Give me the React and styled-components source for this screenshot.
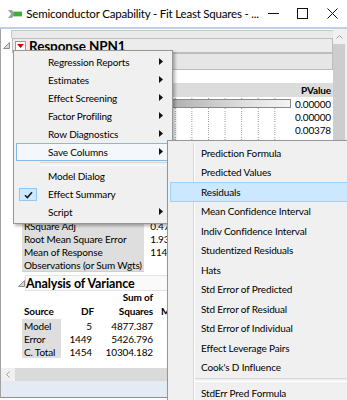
import React from "react";
import styled, { createGlobalStyle } from "styled-components";

const GlobalStyle = createGlobalStyle`
  html, body {
    margin: 0;
    padding: 0;
    background: #fff;
  }
  body {
    font-family: Lato, "Open Sans", sans-serif;
    color: #000;
  }
  * {
    box-sizing: border-box;
  }
`;

const Window = styled.div`
  position: relative;
  width: 347px;
  height: 400px;
  overflow: hidden;
  display: flex;
  flex-direction: column;
  background: #fff;
  padding-bottom: 2px;
`;

const TitleBar = styled.div`
  height: 27px;
  display: flex;
  align-items: center;
  padding-left: 8px;
`;

const Title = styled.div`
  flex: 1;
  margin-left: 4px;
  font-size: 11.5px;
  letter-spacing: -0.2px;
  white-space: nowrap;
`;

const WinButton = styled.div`
  width: 37px;
  height: 27px;
  display: flex;
  align-items: center;
  justify-content: center;
`;

const TitleLine = styled.div`
  height: 2px;
  background: #bcd0e7;
`;

const Body = styled.div`
  flex: 1;
  display: flex;
  border-left: 1px solid #a3a3a3;
  min-height: 0;
`;

const Content = styled.div`
  flex: 1;
  padding-top: 1px;
  overflow: hidden;
  font-size: 10px;
  letter-spacing: -0.15px;
`;

const VScroll = styled.div`
  width: 14px;
  display: flex;
  flex-direction: column;
  border-right: 2px solid #f0f0f0;
  background: #f0f0f0;
`;

const ScrollArrow = styled.div`
  height: 15px;
  display: flex;
  align-items: center;
  justify-content: center;
  background: #f0f0f0;
`;

const ScrollThumb = styled.div`
  flex: 1;
  background: #cdcdcd;
`;

const HScroll = styled.div`
  height: 13px;
  display: flex;
  background: #dadada;
`;

const HArrow = styled.div`
  width: 15px;
  display: flex;
  align-items: center;
  justify-content: center;
  background: #f0f0f0;
  border-left: 1px solid #a3a3a3;
`;

const StatusBar = styled.div`
  height: 17px;
  background: #e5ebf4;
  border-left: 1px solid #a3a3a3;
  border-bottom: 1px solid #8d8d8d;
`;

/* report outline */

const PrevStrip = styled.div`
  height: 8px;
  margin-left: 10px;
  background: #e9e9e9;
  border-top: 1px solid #c6c6c6;
  border-left: 1px solid #c6c6c6;
`;

const OutlineRow = styled.div`
  display: flex;
  align-items: center;
  height: ${(p) => p.$h}px;
  margin-left: ${(p) => p.$indent}px;
`;

const DisclosureBox = styled.div`
  width: ${(p) => p.$w}px;
  display: flex;
  justify-content: center;
`;

const OutlineBox = styled.div`
  flex: 1;
  height: 100%;
  display: flex;
  align-items: center;
  gap: 3px;
  padding-left: ${(p) => p.$pad ?? 2}px;
  background: ${(p) => p.$bg};
  border: 1px solid ${(p) => p.$line || "#bdbdbd"};
  font-weight: 700;
  font-size: ${(p) => p.$size}px;
  letter-spacing: -0.1px;
  white-space: nowrap;
`;

const RedButton = styled.div`
  width: 11px;
  height: 10px;
  background: #fff;
  border: 1px solid #9a9a9a;
  display: flex;
  align-items: center;
  justify-content: center;
`;

const Indent = styled.div`
  padding-left: 20px;
`;

const Gap = styled.div`
  height: ${(p) => p.$h}px;
`;

const EffectTable = styled.div`
  display: grid;
  grid-template-columns: 80px 40px 1fr 42px;
`;

const HeadCell = styled.div`
  height: 14px;
  background: #dcdcdc;
  font-weight: 700;
  display: flex;
  align-items: center;
  justify-content: ${(p) => (p.$right ? "flex-end" : "flex-start")};
  padding: 0 2px;
`;

const Cell = styled.div`
  height: 13px;
  display: flex;
  align-items: center;
  justify-content: ${(p) => (p.$right ? "flex-end" : "flex-start")};
  padding: 0 ${(p) => p.$padR ?? 2}px 0 2px;
  background: ${(p) => p.$bg || "transparent"};
  white-space: nowrap;
`;

const ChartCell = styled.div`
  height: 13px;
  display: flex;
  align-items: center;
  background-image: linear-gradient(to bottom, #fff 50%, transparent 50%),
    linear-gradient(to right, #9a9a9a 1px, transparent 1px);
  background-size: 100% 2px, 16.6px 100%;
  background-position: 0 0, 0.6px 0;
`;

const Bar = styled.div`
  height: 9px;
  border: 1px solid #8a8a8a;
  background: linear-gradient(to right, #9c9c9c, #e0e0e0 70%, #f4f4f4);
`;

const ButtonRow = styled.div`
  height: 24px;
  display: flex;
  align-items: center;
  gap: 4px;
`;

const SmallButton = styled.div`
  height: 18px;
  width: ${(p) => p.$w}px;
  border: 1px solid #adadad;
  background: #e1e1e1;
`;

const SummaryTable = styled.div`
  display: grid;
  grid-template-columns: 122px 50px;
  margin-left: 1px;
  width: 122px;
  border-bottom: 1px solid #cfcfcf;
`;

const AnovaTable = styled.div`
  display: grid;
  grid-template-columns: 39px 33px 59px auto;
  justify-content: start;
  margin-left: 1px;
`;

const AnovaHead = styled.div`
  font-weight: 700;
  line-height: 14px;
  display: flex;
  flex-direction: column;
  justify-content: flex-end;
  align-items: ${(p) => (p.$right ? "flex-end" : "flex-start")};
  padding: 0 ${(p) => (p.$right ? 0 : 2)}px 1px ${(p) => p.$padL ?? 2}px;
  height: 28px;
  white-space: nowrap;
`;

/* menus */

const Menu = styled.div`
  position: absolute;
  left: ${(p) => p.$left}px;
  top: ${(p) => p.$top}px;
  width: ${(p) => p.$width}px;
  padding: 2px 0;
  background: #f0f0f0;
  border: 1px solid #979797;
  box-shadow: 2px 2px 3px rgba(0, 0, 0, 0.3);
  font-size: 10px;
  letter-spacing: -0.15px;
  z-index: ${(p) => p.$z};
`;

const Gutter = styled.div`
  position: absolute;
  left: ${(p) => p.$x}px;
  top: 2px;
  bottom: 0;
  width: 2px;
  border-left: 1px solid #d7d7d7;
  border-right: 1px solid #fff;
`;

const MenuItem = styled.div`
  position: relative;
  height: ${(p) => p.$h}px;
  display: flex;
  align-items: center;
  margin: 0 2px;
  padding-left: ${(p) => p.$pad}px;
  white-space: nowrap;
  border: 1px solid
    ${(p) => (p.$state === "open" ? "#84b9e6" : p.$state === "hover" ? "#99d1ff" : "transparent")};
  background: ${(p) => (p.$state === "hover" ? "#cce8ff" : p.$state === "open" ? "#f4f8fc" : "transparent")};
`;

const ItemArrow = styled.div`
  position: absolute;
  right: 6px;
  top: 50%;
  margin-top: -4px;
  line-height: 0;
`;

const CheckBox = styled.div`
  position: absolute;
  left: 2px;
  top: 2px;
  width: 18px;
  height: 13px;
  background: #cce8ff;
  border: 1px solid #90c8f6;
  display: flex;
  align-items: center;
  justify-content: center;
`;

const Separator = styled.div`
  height: 6px;
  margin-left: ${(p) => p.$left}px;
  display: flex;
  align-items: center;
  &::after {
    content: "";
    flex: 1;
    height: 2px;
    border-top: 1px solid #d7d7d7;
    border-bottom: 1px solid #fff;
  }
`;

const Arrow = () => (
  <svg width="4" height="7" viewBox="0 0 4 7">
    <polygon points="0,0 4,3.5 0,7" fill="#111" />
  </svg>
);

const Disclosure = () => (
  <svg width="7" height="7" viewBox="0 0 7 7">
    <polygon points="6.5,0.5 6.5,6.5 0.5,6.5" fill="#d8d8d8" stroke="#8c8c8c" strokeWidth="1" />
  </svg>
);

const mainItems = [
  { label: "Regression Reports", sub: true },
  { label: "Estimates", sub: true },
  { label: "Effect Screening", sub: true },
  { label: "Factor Profiling", sub: true },
  { label: "Row Diagnostics", sub: true },
  { label: "Save Columns", sub: true, state: "open" },
  { sep: true },
  { label: "Model Dialog" },
  { label: "Effect Summary", checked: true },
  { label: "Script", sub: true },
];

const saveItems = [
  "Prediction Formula",
  "Predicted Values",
  "Residuals",
  "Mean Confidence Interval",
  "Indiv Confidence Interval",
  "Studentized Residuals",
  "Hats",
  "Std Error of Predicted",
  "Std Error of Residual",
  "Std Error of Individual",
  "Effect Leverage Pairs",
  "Cook's D Influence",
  null,
  "StdErr Pred Formula",
];

// rows of the effect summary; only the bars and p-values show beside the menu
const effects = [
  { bar: 100, p: "0.00000" },
  { bar: 14, p: "0.00000" },
  { bar: 3, p: "0.00378" },
  { bar: 1, p: "" },
  { bar: 0, p: "" },
];

const summary = [
  ["", ""],
  ["RSquare Adj", "0.471547"],
  ["Root Mean Square Error", "1.935243"],
  ["Mean of Response", "114.0722"],
  ["Observations (or Sum Wgts)", "1455"],
];

const anova = [
  ["Model", "5", "4877.387"],
  ["Error", "1449", "5426.796"],
  ["C. Total", "1454", "10304.182"],
];

export default function App() {
  return (
    <>
      <GlobalStyle />
      <Window>
        <TitleBar>
          <svg width="18" height="12" viewBox="0 0 18 12">
            <polygon points="0,1 5,1 9,6 5,11 0,11 4,6" fill="#9aa3a8" />
            <rect x="7" y="3" width="11" height="6" fill="#3cae3c" />
          </svg>
          <Title>Semiconductor Capability - Fit Least Squares - ...</Title>
          <WinButton>
            <svg width="11" height="11" viewBox="0 0 11 11">
              <line x1="0" y1="5.5" x2="11" y2="5.5" stroke="#111" strokeWidth="1" />
            </svg>
          </WinButton>
          <WinButton>
            <svg width="11" height="11" viewBox="0 0 11 11">
              <rect x="0.5" y="0.5" width="10" height="10" fill="none" stroke="#111" strokeWidth="1" />
            </svg>
          </WinButton>
          <WinButton>
            <svg width="11" height="11" viewBox="0 0 11 11">
              <path d="M0.5 0.5 L10.5 10.5 M10.5 0.5 L0.5 10.5" stroke="#111" strokeWidth="1" />
            </svg>
          </WinButton>
        </TitleBar>
        <TitleLine />

        <Body>
          <Content>
            <PrevStrip />
            <OutlineRow $h={15} $indent={0}>
              <DisclosureBox $w={11}>
                <Disclosure />
              </DisclosureBox>
              <OutlineBox $bg="#ececec" $size={13.5}>
                <RedButton>
                  <svg width="7" height="4" viewBox="0 0 7 4">
                    <polygon points="0,0 7,0 3.5,4" fill="#d40000" />
                  </svg>
                </RedButton>
                Response NPN1
              </OutlineBox>
            </OutlineRow>

            <Indent>
              <OutlineRow $h={17} $indent={0}>
                <OutlineBox $bg="#e6e6e6" $size={12} />
              </OutlineRow>
              <Gap $h={13} />
              <EffectTable>
                <HeadCell />
                <HeadCell />
                <HeadCell />
                <HeadCell $right>PValue</HeadCell>
                {effects.map((e, i) => (
                  <React.Fragment key={i}>
                    <Cell />
                    <Cell />
                    <ChartCell>
                      {e.bar > 0 && <Bar style={{ width: `${e.bar}%` }} />}
                    </ChartCell>
                    <Cell $right>{e.p}</Cell>
                  </React.Fragment>
                ))}
              </EffectTable>
              <ButtonRow>
                <SmallButton $w={48} />
                <SmallButton $w={30} />
                <SmallButton $w={30} />
              </ButtonRow>
              <OutlineRow $h={16} $indent={-6}>
                <DisclosureBox $w={6}>
                  <Disclosure />
                </DisclosureBox>
                <OutlineBox $bg="#f4f4f4" $size={12.5} />
              </OutlineRow>
              <Gap $h={4} />
              <SummaryTable>
                {summary.map(([k, v], i) => (
                  <React.Fragment key={i}>
                    <Cell $bg="#dedede">{k}</Cell>
                    <Cell $right>{v}</Cell>
                  </React.Fragment>
                ))}
              </SummaryTable>
              <Gap $h={3} />
              <OutlineRow $h={16} $indent={-4}>
                <DisclosureBox $w={8}>
                  <Disclosure />
                </DisclosureBox>
                <OutlineBox $bg="#fafafa" $line="#e2e2e2" $size={12.5} $pad={0}>
                  Analysis of Variance
                </OutlineBox>
              </OutlineRow>
              <AnovaTable>
                <AnovaHead>Source</AnovaHead>
                <AnovaHead $right>DF</AnovaHead>
                <AnovaHead $right>
                  <span>Sum of</span>
                  <span>Squares</span>
                </AnovaHead>
                <AnovaHead $padL={8}>Mean Square</AnovaHead>
                {anova.map(([s, df, ss]) => (
                  <React.Fragment key={s}>
                    <Cell $bg="#dedede">{s}</Cell>
                    <Cell $right>{df}</Cell>
                    <Cell $right $padR={0}>{ss}</Cell>
                    <Cell />
                  </React.Fragment>
                ))}
              </AnovaTable>
            </Indent>
          </Content>
          <VScroll>
            <ScrollArrow>
              <svg width="7" height="4" viewBox="0 0 7 4">
                <polyline points="0.5,3.5 3.5,0.5 6.5,3.5" fill="none" stroke="#a0a0a0" strokeWidth="1" />
              </svg>
            </ScrollArrow>
            <ScrollThumb />
          </VScroll>
        </Body>

        <HScroll>
          <HArrow>
            <svg width="4" height="7" viewBox="0 0 4 7">
              <polyline points="3.5,0.5 0.5,3.5 3.5,6.5" fill="none" stroke="#a0a0a0" strokeWidth="1" />
            </svg>
          </HArrow>
        </HScroll>
        <StatusBar />

        <Menu $left={13} $top={50} $width={160} $z={2}>
          {mainItems.map((it, i) =>
            it.sep ? (
              <Separator key={i} $left={26} />
            ) : (
              <MenuItem key={it.label} $h={18} $pad={31} $state={it.state}>
                {it.checked && (
                  <CheckBox>
                    <svg width="9" height="8" viewBox="0 0 9 8">
                      <path d="M1 4.2 L3.4 6.6 L8 1.2" fill="none" stroke="#1a1a1a" strokeWidth="1.6" />
                    </svg>
                  </CheckBox>
                )}
                {it.label}
                {it.sub && (
                  <ItemArrow>
                    <Arrow />
                  </ItemArrow>
                )}
              </MenuItem>
            )
          )}
        </Menu>

        <Menu $left={167} $top={140} $width={200} $z={3}>
          <Gutter $x={25} />
          {saveItems.map((label, i) =>
            label === null ? (
              <Separator key={i} $left={27} />
            ) : (
              <MenuItem key={label} $h={19.5} $pad={30} $state={label === "Residuals" ? "hover" : undefined}>
                {label}
              </MenuItem>
            )
          )}
        </Menu>
      </Window>
    </>
  );
}
